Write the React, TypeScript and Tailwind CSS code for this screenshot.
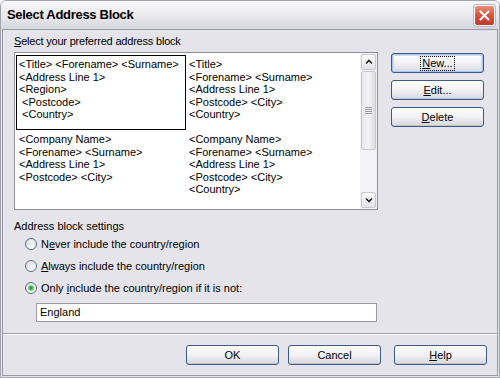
import React from "react"

const font = { fontFamily: '"Liberation Sans", Arial, sans-serif' }

function Btn({ children, focus = false }: { children: React.ReactNode; focus?: boolean }) {
  return (
    <div
      className={
        "w-[93px] h-[20px] rounded-[3px] border border-[#3d5a85] bg-gradient-to-b from-[#ffffff] via-[#f2f2f5] to-[#d6d6de] flex items-center justify-center text-[11px] text-black " +
        (focus ? "shadow-[inset_0_0_0_1px_#a9c6ee,inset_0_0_0_2px_#cfe0f5]" : "shadow-[inset_0_-1px_0_#c4c4cc]")
      }
    >
      {focus ? <span className="px-[1px] leading-[13px] outline outline-1 outline-dotted outline-black">{children}</span> : children}
    </div>
  )
}

function Radio({ checked = false }: { checked?: boolean }) {
  return (
    <span className="w-[12px] h-[12px] rounded-full border border-[#56708f] bg-gradient-to-br from-[#dcdce2] to-[#ffffff] flex items-center justify-center shrink-0">
      {checked && <span className="w-[4px] h-[4px] rounded-full bg-[#2bb02b] shadow-[0_0_0_1px_#8fd48f]" />}
    </span>
  )
}

function Cell({ lines, selected = false }: { lines: string[]; selected?: boolean }) {
  return (
    <div className={"w-[170px] h-[75px] pl-[2px] pt-[2px] border " + (selected ? "border-black" : "border-transparent")}>
      {lines.map((l, i) => (
        <div key={i} className="whitespace-pre text-[11px] leading-[12.5px] text-black">
          {l}
        </div>
      ))}
    </div>
  )
}

export default function App() {
  return (
    <div style={font} className="w-[500px] h-[378px] bg-[#e4e4ea] flex flex-col border border-[#a3a3ae] rounded-t-[6px] overflow-hidden">
      {/* Title bar */}
      <div className="h-[28px] shrink-0 flex items-center pl-[6px] pr-[4px] bg-gradient-to-b from-[#f9f9fb] via-[#e9e9ee] to-[#d6d6de]">
        <span className="text-[13px] font-bold text-black tracking-[-0.3px]">Select Address Block</span>
        <div className="ml-auto w-[21px] h-[21px] rounded-[3px] border border-white bg-gradient-to-b from-[#ec8c78] via-[#d6533d] to-[#c2392a] flex items-center justify-center shadow-[0_0_0_1px_#b8b8c2]">
          <svg width="11" height="11" viewBox="0 0 11 11">
            <path d="M1.5 1.5 L9.5 9.5 M9.5 1.5 L1.5 9.5" stroke="white" strokeWidth="2" strokeLinecap="round" />
          </svg>
        </div>
      </div>

      {/* Body */}
      <div className="flex-1 mx-[1px] mb-[1px] border border-[#9a9aa6] flex flex-col pl-[11px]">
        <div className="mt-[5px] text-[11px] leading-[13px] text-black tracking-[-0.2px]">
          <u>S</u>elect your preferred address block
        </div>

        <div className="mt-[4px] flex">
          {/* List */}
          <div className="w-[364px] h-[158px] border border-[#8f8f9c] bg-white flex">
            <div className="flex-1 pl-[1px] pt-[2px]">
              <div className="flex">
                <Cell selected lines={["<Title> <Forename> <Surname>", "<Address Line 1>", "<Region>", " <Postcode>", " <Country>"]} />
                <Cell lines={["<Title>", "<Forename> <Surname>", "<Address Line 1>", "<Postcode> <City>", "<Country>"]} />
              </div>
              <div className="flex">
                <Cell lines={["<Company Name>", "<Forename> <Surname>", "<Address Line 1>", "<Postcode> <City>"]} />
                <Cell lines={["<Company Name>", "<Forename> <Surname>", "<Address Line 1>", "<Postcode> <City>", "<Country>"]} />
              </div>
            </div>
            {/* Scrollbar */}
            <div className="w-[17px] bg-[#f3f3f5] flex flex-col p-[1px] gap-[1px]">
              <div className="h-[16px] rounded-[2px] border border-[#c8c8d2] bg-gradient-to-b from-white to-[#e2e2e8] flex items-center justify-center">
                <svg width="8" height="6" viewBox="0 0 8 6">
                  <path d="M1 4.5 L4 1.5 L7 4.5" stroke="#222" strokeWidth="1.6" fill="none" />
                </svg>
              </div>
              <div className="h-[79px] rounded-[2px] border border-[#c8c8d2] bg-gradient-to-r from-[#e6e6ec] via-[#f4f4f7] to-[#dcdce3] flex flex-col items-center justify-center gap-[1px]">
                <div className="w-[7px] h-[1px] bg-[#9a9aa6]" />
                <div className="w-[7px] h-[1px] bg-[#9a9aa6]" />
                <div className="w-[7px] h-[1px] bg-[#9a9aa6]" />
                <div className="w-[7px] h-[1px] bg-[#9a9aa6]" />
              </div>
              <div className="flex-1" />
              <div className="h-[16px] rounded-[2px] border border-[#c8c8d2] bg-gradient-to-b from-white to-[#e2e2e8] flex items-center justify-center">
                <svg width="8" height="6" viewBox="0 0 8 6">
                  <path d="M1 1.5 L4 4.5 L7 1.5" stroke="#222" strokeWidth="1.6" fill="none" />
                </svg>
              </div>
            </div>
          </div>

          {/* Side buttons */}
          <div className="ml-[13px] mt-[1px] flex flex-col gap-[7px]">
            <Btn focus>
              <u>N</u>ew...
            </Btn>
            <Btn>
              <u>E</u>dit...
            </Btn>
            <Btn>
              <u>D</u>elete
            </Btn>
          </div>
        </div>

        <div className="mt-[10px] text-[11px] leading-[13px] text-black">Address block settings</div>
        <div className="ml-[11px] flex flex-col text-[11px] text-black">
          <div className="h-[22px] flex items-center gap-[4px]">
            <Radio />
            <span>
              N<u>e</u>ver include the country/region
            </span>
          </div>
          <div className="h-[22px] flex items-center gap-[4px]">
            <Radio />
            <span>
              <u>A</u>lways include the country/region
            </span>
          </div>
          <div className="h-[22px] flex items-center gap-[4px]">
            <Radio checked />
            <span>
              Only <u>i</u>nclude the country/region if it is not:
            </span>
          </div>
        </div>
        <div className="ml-[22px] mt-[4px] w-[341px] h-[19px] border border-[#9a9aa6] bg-white flex items-center pl-[3px] text-[11px] text-black">
          England
        </div>

        <div className="mt-[11px] -ml-[11px] h-[2px] border-t border-[#a0a0ac] border-b border-b-white" />

        <div className="mt-[10px] flex justify-end pr-[10px]">
          <Btn>OK</Btn>
          <div className="ml-[9px]">
            <Btn>Cancel</Btn>
          </div>
          <div className="ml-[13px]">
            <Btn>
              <u>H</u>elp
            </Btn>
          </div>
        </div>
      </div>
    </div>
  )
}
